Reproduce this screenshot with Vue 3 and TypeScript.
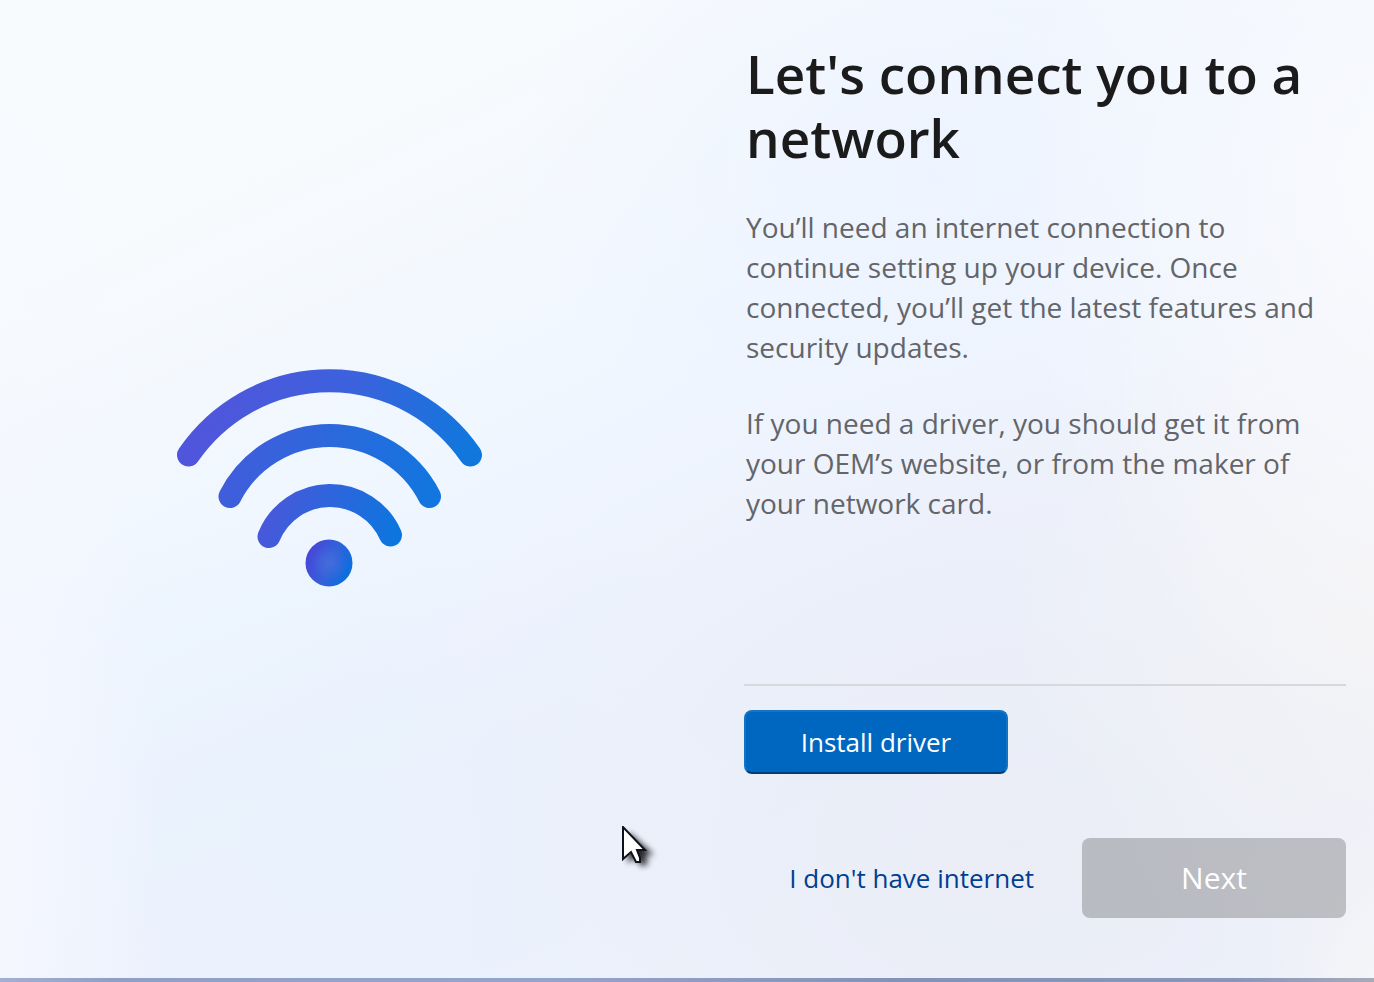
<script setup lang="ts">
const title = "Let's connect you to a network"
const paragraphs: string[] = [
  'You’ll need an internet connection to continue setting up your device. Once connected, you’ll get the latest features and security updates.',
  'If you need a driver, you should get it from your OEM’s website, or from the maker of your network card.',
]
</script>

<template>
  <div class="screen">
    <main class="layout">
      <div class="artwork">
        <svg class="wifi" viewBox="0 0 306 220" role="img" aria-label="Wi-Fi">
          <defs>
            <linearGradient id="outer" gradientUnits="userSpaceOnUse" x1="40" y1="30" x2="280" y2="110">
              <stop offset="0" stop-color="#4f56dc" />
              <stop offset="0.5" stop-color="#3b62dc" />
              <stop offset="1" stop-color="#1177dd" />
            </linearGradient>
            <linearGradient id="middle" gradientUnits="userSpaceOnUse" x1="50" y1="80" x2="250" y2="130">
              <stop offset="0" stop-color="#425cdb" />
              <stop offset="1" stop-color="#1375de" />
            </linearGradient>
            <linearGradient id="inner" gradientUnits="userSpaceOnUse" x1="95" y1="130" x2="220" y2="170">
              <stop offset="0" stop-color="#4858db" />
              <stop offset="1" stop-color="#0c76de" />
            </linearGradient>
            <linearGradient id="dot" x1="0" y1="0.3" x2="1" y2="0.7">
              <stop offset="0" stop-color="#4a44d8" />
              <stop offset="0.5" stop-color="#3460da" />
              <stop offset="1" stop-color="#0770df" />
            </linearGradient>
            <radialGradient id="dot-glow">
              <stop offset="0" stop-color="#4a70dc" stop-opacity="0.8" />
              <stop offset="1" stop-color="#4a70dc" stop-opacity="0" />
            </radialGradient>
          </defs>
          <g fill="none" stroke-width="23" stroke-linecap="round">
            <path d="M12.500 87A171 171 0 0 1 294.500 87" stroke="url(#outer)" />
            <path d="M54 128.500A112 112 0 0 1 253.500 128.500" stroke="url(#middle)" />
            <path d="M93 168.500A66 66 0 0 1 214.500 167" stroke="url(#inner)" />
          </g>
          <circle cx="153" cy="195" r="23.500" fill="url(#dot)" />
          <circle cx="153" cy="195" r="18" fill="url(#dot-glow)" />
        </svg>
      </div>

      <section class="content">
        <h1>{{ title }}</h1>
        <div class="copy">
          <p v-for="text in paragraphs" :key="text">{{ text }}</p>
        </div>
        <div class="driver">
          <button type="button" class="install">Install driver</button>
        </div>
        <footer class="actions">
          <button type="button" class="skip">I don't have internet</button>
          <button type="button" class="next" disabled>Next</button>
        </footer>
      </section>
    </main>
    <div class="edge"></div>

    <svg class="cursor" viewBox="0 0 44 54" aria-hidden="true">
      <path class="cursor-shadow" d="M6 6V37L14 31L19 40L26 38L23 29H32Z" />
      <path d="M1 1V33L9 26L14 36H18V32L15 24H23Z" fill="#fff" stroke="#10101c" stroke-width="2" />
    </svg>
  </div>
</template>

<style>
body {
  margin: 0;
}
</style>

<style scoped>
.screen {
  position: relative;
  box-sizing: border-box;
  min-height: 100vh;
  display: flex;
  flex-direction: column;
  overflow: hidden;
  font-family: "Open Sans", "Noto Sans", sans-serif;
  background:
    radial-gradient(ellipse 28% 55% at 102% 20%, #f9fafd 0%, #f9fafd00 100%),
    radial-gradient(ellipse 26% 40% at 100% 62%, #f3f3f5 0%, #f3f3f500 100%),
    radial-gradient(ellipse 10% 20% at 102% 102%, #f6f6f8 0%, #f6f6f800 100%),
    radial-gradient(ellipse 46% 50% at 74% 86%, #eaedf6 0%, #eaedf600 100%),
    radial-gradient(ellipse 12% 80% at 0% 90%, #f5f7ff 0%, #f5f7ff00 100%),
    radial-gradient(ellipse 40% 35% at 26% 86%, #e9f2fd 0%, #e9f2fd00 100%),
    radial-gradient(ellipse 30% 34% at 68% 18%, #eef4ff 0%, #eef4ff00 100%),
    linear-gradient(155deg, #f8fbfd 0%, #f7fafd 20%, #eff6ff 42%, #edf1fc 62%, #eff3fc 100%);
}

.layout {
  flex: 1;
  display: grid;
  grid-template-columns: minmax(0, 658fr) minmax(0, 602fr);
  gap: 86px;
  padding: 42px 28px 60px 0;
}

.artwork {
  display: grid;
  place-items: center;
  padding-bottom: 4px;
}

.wifi {
  width: 306px;
  height: 220px;
}

.content {
  display: flex;
  flex-direction: column;
}

h1 {
  margin: 0;
  padding-left: 2px;
  font-size: 53px;
  line-height: 64px;
  font-weight: 600;
  color: #1b1b1b;
}

.copy {
  margin-top: 37px;
  padding-left: 2px;
  display: grid;
  gap: 36px;
  color: #636569;
  font-size: 28px;
  line-height: 40px;
}

p {
  margin: 0;
}

.driver {
  margin-top: auto;
  padding-top: 24px;
  border-top: 2px solid #d6d8de;
}

button {
  box-sizing: border-box;
  border: 0;
  border-radius: 8px;
  font-family: inherit;
  font-size: 26px;
  line-height: 36px;
}

.install {
  display: block;
  width: 264px;
  height: 64px;
  padding: 0;
  border: 2px solid #1473c5;
  border-bottom-color: #003e73;
  background: #0067c0;
  color: #fff;
}

.actions {
  display: flex;
  justify-content: flex-end;
  align-items: center;
  gap: 24px;
  margin-top: 64px;
}

.skip {
  height: 64px;
  padding: 0 24px;
  background: transparent;
  color: #003e92;
}

.next {
  width: 264px;
  height: 80px;
  padding: 0;
  background: rgb(0 0 0 / 21%);
  color: #fff;
  font-size: 30px;
}

.edge {
  height: 4px;
  background: linear-gradient(90deg, #a3b0d3, #8fa0c8 8%, #95a4cc 40%, #8293ba 65%, #8797bb 90%, #a6abba);
}

.cursor {
  position: absolute;
  left: 622px;
  top: 826px;
  width: 44px;
  height: 54px;
}

.cursor-shadow {
  fill: #000;
  opacity: 0.85;
  filter: blur(3px);
}
</style>
